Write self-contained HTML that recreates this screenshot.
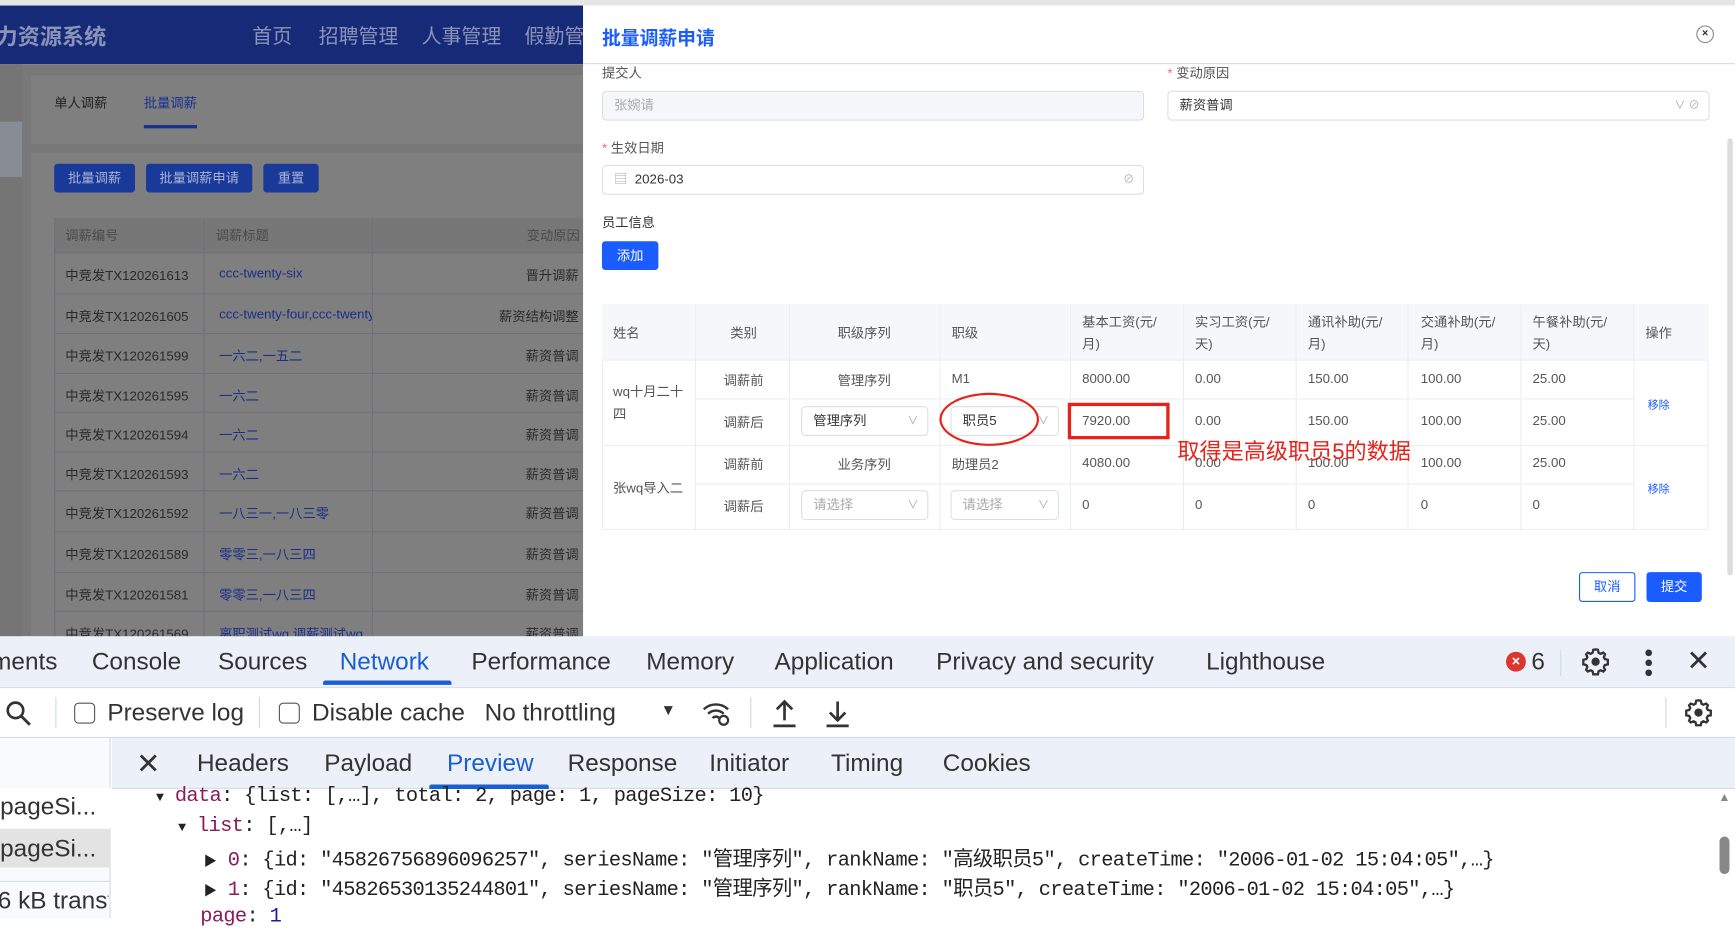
<!DOCTYPE html>
<html><head><meta charset="utf-8">
<style>
*{box-sizing:border-box;margin:0;padding:0}
html,body{width:1735px;height:918px;overflow:hidden;background:#fff}
#w{position:absolute;left:0;top:0;width:1568px;height:830px;transform:scale(1.10651);transform-origin:0 0;font-family:"Liberation Sans","Noto Sans CJK SC",sans-serif;color:#333}
.a{position:absolute}
.t{position:absolute;white-space:nowrap}
.cell{position:absolute;font-size:12px;color:#555;white-space:nowrap}
.dt{position:absolute;font-size:22px;color:#333;top:585px;white-space:nowrap;font-family:"Liberation Sans","Noto Sans CJK SC",sans-serif}
.code{position:absolute;font-family:"Liberation Mono","Noto Sans CJK SC",monospace;font-size:18.4px;color:#222;white-space:nowrap;letter-spacing:-0.6px}
.k{color:#8b1a5a}
.sel{position:absolute;border:1px solid #dcdfe6;border-radius:4px;background:#fff;font-size:12px;padding-left:10px}
</style></head><body><div id="w">
<div class="a" style="left:0;top:0;width:527px;height:5px;background:#e6e6e6"></div>
<div class="a" style="left:0;top:5px;width:527px;height:53px;background:#172a78"></div>
<div class="t" style="left:-4px;top:17px;font-size:20px;font-weight:bold;color:#8a93b8">力资源系统</div>
<div class="t" style="left:228px;top:19px;font-size:18px;color:#8a93b8">首页</div>
<div class="t" style="left:288px;top:19px;font-size:18px;color:#8a93b8">招聘管理</div>
<div class="t" style="left:381px;top:19px;font-size:18px;color:#8a93b8">人事管理</div>
<div class="t" style="left:474px;top:19px;font-size:18px;color:#8a93b8">假勤管</div>
<div class="a" style="left:0;top:58px;width:527px;height:517px;background:#787878"></div>
<div class="a" style="left:0;top:58px;width:20px;height:517px;background:#757575"></div>
<div class="a" style="left:0;top:110px;width:20px;height:50px;background:#888c94"></div>
<div class="a" style="left:28px;top:68px;width:499px;height:62px;background:#7f7f7f"></div>
<div class="t" style="left:49px;top:84px;font-size:12px;color:#222">单人调薪</div>
<div class="t" style="left:130px;top:84px;font-size:12px;color:#1a3190">批量调薪</div>
<div class="a" style="left:130px;top:113px;width:48px;height:3px;background:#1a3190"></div>
<div class="a" style="left:28px;top:138px;width:499px;height:437px;background:#7f7f7f"></div>
<div class="a" style="left:49px;top:148px;width:73px;height:26px;background:#1a3a9a;border-radius:3px;color:#a8b3d6;font-size:12px;text-align:center;line-height:26px">批量调薪</div>
<div class="a" style="left:132px;top:148px;width:96px;height:26px;background:#1a3a9a;border-radius:3px;color:#a8b3d6;font-size:12px;text-align:center;line-height:26px">批量调薪申请</div>
<div class="a" style="left:238px;top:148px;width:50px;height:26px;background:#1a3a9a;border-radius:3px;color:#a8b3d6;font-size:12px;text-align:center;line-height:26px">重置</div>
<div class="a" style="left:49px;top:197px;width:478px;height:31px;background:#777"></div>
<div class="a" style="left:49px;top:197px;width:1px;height:378px;background:#707078"></div>
<div class="a" style="left:184px;top:197px;width:1px;height:378px;background:#707078"></div>
<div class="a" style="left:336px;top:197px;width:1px;height:378px;background:#707078"></div>
<div class="t" style="left:59px;top:204px;font-size:12px;color:#4a4a4a">调薪编号</div>
<div class="t" style="left:195px;top:204px;font-size:12px;color:#4a4a4a">调薪标题</div>
<div class="t" style="left:476px;top:204px;font-size:12px;color:#4a4a4a">变动原因</div>
<div id="lt"></div>
<div class="a" style="left:527px;top:0;width:1041px;height:5px;background:#e6e6e6"></div>
<div class="a" style="left:527px;top:5px;width:1041px;height:570px;background:#fff"></div>
<div class="t" style="left:544px;top:20px;font-size:17px;font-weight:bold;color:#1a5cff">批量调薪申请</div>
<div class="a" style="left:1533px;top:23px;width:16px;height:16px;border:1.5px solid #888;border-radius:50%;font-size:10px;text-align:center;line-height:13px;color:#333;font-weight:bold">×</div>
<div class="a" style="left:527px;top:57px;width:1041px;height:1px;background:#ddd"></div>
<div class="a" style="left:1561px;top:125px;width:5px;height:395px;background:#ddd;border-radius:3px"></div>
<div class="t" style="left:544px;top:57px;font-size:12px;color:#555">提交人</div>
<div class="t" style="left:1055px;top:57px;font-size:12px;color:#555"><span style="color:#f56c6c">*</span> 变动原因</div>
<div class="sel" style="left:544px;top:82px;width:490px;height:27px;background:#f5f7fa;color:#aaa;line-height:25px">张婉请</div>
<div class="sel" style="left:1055px;top:82px;width:490px;height:27px;color:#333;line-height:25px">薪资普调<span style="position:absolute;right:8px;color:#aaa;font-size:10px">∨ ⊘</span></div>
<div class="t" style="left:544px;top:125px;font-size:12px;color:#555"><span style="color:#f56c6c">*</span> 生效日期</div>
<div class="sel" style="left:544px;top:149px;width:490px;height:27px;color:#333;line-height:25px"><span style="color:#aaa">▤</span>&nbsp; 2026-03<span style="position:absolute;right:8px;color:#aaa;font-size:10px">⊘</span></div>
<div class="t" style="left:544px;top:192px;font-size:12px;color:#333">员工信息</div>
<div class="a" style="left:544px;top:218px;width:51px;height:26px;background:#1a5cff;border-radius:3px;color:#fff;font-size:12px;text-align:center;line-height:26px">添加</div>
<div class="a" style="left:544px;top:275px;width:1000px;height:204px;border:1px solid #ebeef5"></div>
<div class="a" style="left:544px;top:275px;width:1000px;height:51px;background:#f5f7fa;border-bottom:1px solid #ebeef5"></div>
<div id="tb"></div>
<div class="a" style="left:849px;top:355px;width:90px;height:48px;border:2px solid #e8221a;border-radius:50%"></div>
<div class="a" style="left:965px;top:364px;width:92px;height:33px;border:3px solid #e8221a"></div>
<div class="t" style="left:1064px;top:392px;font-size:20px;color:#e8221a">取得是高级职员5的数据</div>
<div class="a" style="left:1427px;top:517px;width:51px;height:27px;border:1px solid #1a5cff;border-radius:3px;color:#1a5cff;font-size:12px;text-align:center;line-height:25px">取消</div>
<div class="a" style="left:1488px;top:517px;width:50px;height:27px;background:#1a5cff;border-radius:3px;color:#fff;font-size:12px;text-align:center;line-height:27px">提交</div>
<div class="a" style="left:0;top:575px;width:1568px;height:47px;background:#ebf0f9;border-bottom:1px solid #d4dcea"></div>
<div class="dt" style="left:-8px">ments</div>
<div class="dt" style="left:83px">Console</div>
<div class="dt" style="left:197px">Sources</div>
<div class="dt" style="left:307px;color:#1a5fd0">Network</div>
<div class="a" style="left:292px;top:615px;width:116px;height:4px;background:#1a5fd0;border-radius:2px 2px 0 0"></div>
<div class="dt" style="left:426px">Performance</div>
<div class="dt" style="left:584px">Memory</div>
<div class="dt" style="left:700px">Application</div>
<div class="dt" style="left:846px">Privacy and security</div>
<div class="dt" style="left:1090px">Lighthouse</div>
<div class="a" style="left:1361px;top:589px;width:18px;height:18px;background:#dc362e;border-radius:50%;color:#fff;font-size:13px;text-align:center;line-height:18px;font-weight:bold">×</div>
<div class="dt" style="left:1384px">6</div>
<div class="a" style="left:1410px;top:587px;width:1px;height:24px;background:#cfd9ea"></div>
<svg class="a" style="left:1428px;top:584px" width="28" height="28" viewBox="0 0 24 24"><path d="M12 2.5l1.8.3.5 2.3 1.5.8 2.2-.9 1.3 1.3-.9 2.2.8 1.5 2.3.5v3.6l-2.3.5-.8 1.5.9 2.2-1.3 1.3-2.2-.9-1.5.8-.5 2.3h-3.6l-.5-2.3-1.5-.8-2.2.9-1.3-1.3.9-2.2-.8-1.5-2.3-.5v-3.6l2.3-.5.8-1.5-.9-2.2 1.3-1.3 2.2.9 1.5-.8.5-2.3z" fill="none" stroke="#333" stroke-width="1.8"/><circle cx="12" cy="12" r="3.2" fill="#333"/></svg>
<div class="a" style="left:1487px;top:587px;width:6px;height:6px;background:#333;border-radius:50%"></div>
<div class="a" style="left:1487px;top:596px;width:6px;height:6px;background:#333;border-radius:50%"></div>
<div class="a" style="left:1487px;top:605px;width:6px;height:6px;background:#333;border-radius:50%"></div>
<div class="dt" style="left:1524px;top:582px;font-size:26px">✕</div>
<div class="a" style="left:0;top:622px;width:1568px;height:45px;background:#fff;border-bottom:1px solid #d4dcea"></div>
<svg class="a" style="left:4px;top:632px" width="26" height="26" viewBox="0 0 26 26"><circle cx="10" cy="10" r="7" fill="none" stroke="#333" stroke-width="2.4"/><path d="M15 15l8 8" stroke="#333" stroke-width="2.6"/></svg>
<div class="a" style="left:50px;top:630px;width:1px;height:28px;background:#cfd9ea"></div>
<div class="a" style="left:67px;top:635px;width:19px;height:19px;border:1.8px solid #555;border-radius:4px"></div>
<div class="dt" style="left:97px;top:631px">Preserve log</div>
<div class="a" style="left:234px;top:630px;width:1px;height:28px;background:#cfd9ea"></div>
<div class="a" style="left:252px;top:635px;width:19px;height:19px;border:1.8px solid #555;border-radius:4px"></div>
<div class="dt" style="left:282px;top:631px">Disable cache</div>
<div class="dt" style="left:438px;top:631px">No throttling</div>
<div class="dt" style="left:597px;top:633px;font-size:14px">▼</div>
<svg class="a" style="left:633px;top:632px" width="30" height="26" viewBox="0 0 30 26"><path d="M3 9a16 16 0 0 1 22 0M7 13a10 10 0 0 1 14 0M11 17a4 4 0 0 1 6 0" fill="none" stroke="#333" stroke-width="2.2"/><circle cx="21" cy="19" r="4" fill="none" stroke="#333" stroke-width="2"/></svg>
<div class="a" style="left:678px;top:630px;width:1px;height:28px;background:#cfd9ea"></div>
<svg class="a" style="left:696px;top:631px" width="26" height="28" viewBox="0 0 26 28"><path d="M13 20V4M6 10l7-7 7 7M3 25h20" fill="none" stroke="#333" stroke-width="2.4"/></svg>
<svg class="a" style="left:744px;top:631px" width="26" height="28" viewBox="0 0 26 28"><path d="M13 3v16M6 13l7 7 7-7M3 25h20" fill="none" stroke="#333" stroke-width="2.4"/></svg>
<div class="a" style="left:1505px;top:630px;width:1px;height:28px;background:#cfd9ea"></div>
<svg class="a" style="left:1521px;top:630px" width="28" height="28" viewBox="0 0 24 24"><path d="M12 2.5l1.8.3.5 2.3 1.5.8 2.2-.9 1.3 1.3-.9 2.2.8 1.5 2.3.5v3.6l-2.3.5-.8 1.5.9 2.2-1.3 1.3-2.2-.9-1.5.8-.5 2.3h-3.6l-.5-2.3-1.5-.8-2.2.9-1.3-1.3.9-2.2-.8-1.5-2.3-.5v-3.6l2.3-.5.8-1.5-.9-2.2 1.3-1.3 2.2.9 1.5-.8.5-2.3z" fill="none" stroke="#333" stroke-width="1.8"/><circle cx="12" cy="12" r="3.2" fill="#333"/></svg>
<div class="a" style="left:0;top:667px;width:100px;height:163px;background:#f8fafd;border-right:1px solid #d4dcea"></div>
<div class="a" style="left:0;top:712px;width:100px;height:37px;background:#fff"></div>
<div class="a" style="left:0;top:749px;width:100px;height:35px;background:#e3e3e3"></div>
<div class="a" style="left:0;top:796px;width:100px;height:1px;background:#d4dcea"></div>
<div class="dt" style="left:-6px;top:716px">:pageSi...</div>
<div class="dt" style="left:-6px;top:754px">:pageSi...</div>
<div class="dt" style="left:-2px;top:801px;width:100px;overflow:hidden">6 kB transf</div>
<div class="a" style="left:101px;top:667px;width:1467px;height:46px;background:#ebf0f9;border-bottom:1px solid #d4dcea"></div>
<div class="dt" style="left:123px;top:675px;font-size:26px">✕</div>
<div class="dt" style="left:178px;top:677px">Headers</div>
<div class="dt" style="left:293px;top:677px">Payload</div>
<div class="dt" style="left:404px;top:677px;color:#1a5fd0">Preview</div>
<div class="a" style="left:388px;top:709px;width:108px;height:4px;background:#1a5fd0;border-radius:2px 2px 0 0"></div>
<div class="dt" style="left:513px;top:677px">Response</div>
<div class="dt" style="left:641px;top:677px">Initiator</div>
<div class="dt" style="left:751px;top:677px">Timing</div>
<div class="dt" style="left:852px;top:677px">Cookies</div>
<div class="code" style="left:141px;top:709px"><span style="font-size:12px">▼</span> <span class="k">data</span>: {list: [,…], total: 2, page: 1, pageSize: 10}</div>
<div class="code" style="left:161px;top:736px"><span style="font-size:12px">▼</span> <span class="k">list</span>: [,…]</div>
<div class="code" style="left:184px;top:762px"><span style="font-size:12px">▶</span> <span class="k">0</span>: {id: "45826756896096257", seriesName: "管理序列", rankName: "高级职员5", createTime: "2006-01-02 15:04:05",…}</div>
<div class="code" style="left:184px;top:789px"><span style="font-size:12px">▶</span> <span class="k">1</span>: {id: "45826530135244801", seriesName: "管理序列", rankName: "职员5", createTime: "2006-01-02 15:04:05",…}</div>
<div class="code" style="left:181px;top:818px"><span class="k">page</span>: <span style="color:#1a1aa6">1</span></div>
<div class="t" style="left:1553px;top:715px;font-size:11px;color:#888">▲</div>
<div class="a" style="left:1554px;top:756px;width:9px;height:34px;background:#888;border-radius:5px"></div>
</div>
<script>
var lt=document.getElementById('lt'),h='';
var rows=[["中竞发TX120261613","ccc-twenty-six","晋升调薪"],["中竞发TX120261605","ccc-twenty-four,ccc-twenty","薪资结构调整"],["中竞发TX120261599","一六二,一五二","薪资普调"],["中竞发TX120261595","一六二","薪资普调"],["中竞发TX120261594","一六二","薪资普调"],["中竞发TX120261593","一六二","薪资普调"],["中竞发TX120261592","一八三一,一八三零","薪资普调"],["中竞发TX120261589","零零三,一八三四","薪资普调"],["中竞发TX120261581","零零三,一八三四","薪资普调"],["中竞发TX120261569","离职测试wq,调薪测试wq","薪资普调"]];
var ys=[228,265,301,337,372,408,443,480,517,552];
rows.forEach(function(r,i){var y=ys[i];h+='<div class="a" style="left:49px;top:'+y+'px;width:478px;height:1px;background:#707078"></div>';
h+='<div class="t" style="left:59px;top:'+(y+12)+'px;font-size:12px;color:#2a2a2a">'+r[0]+'</div>';
h+='<div class="t" style="left:198px;top:'+(y+12)+'px;font-size:12px;color:#1a2e8a;width:138px;overflow:hidden">'+r[1]+'</div>';
h+='<div class="t" style="right:1045px;top:'+(y+12)+'px;font-size:12px;color:#2a2a2a">'+r[2]+'</div>';});
lt.innerHTML=h;
var tb=document.getElementById('tb');h='';
var cx=[628,713,849,967,1069,1171,1272,1374,1476];
cx.forEach(function(x){h+='<div class="a" style="left:'+x+'px;top:275px;width:1px;height:204px;background:#ebeef5"></div>';});
[360,437].forEach(function(y){h+='<div class="a" style="left:628px;top:'+y+'px;width:848px;height:1px;background:#ebeef5"></div>';});
h+='<div class="a" style="left:544px;top:402px;width:1000px;height:1px;background:#ebeef5"></div>';
function c(x,y,t,s){h+='<div class="cell" style="left:'+x+'px;top:'+y+'px;'+(s||'')+'">'+t+'</div>';}
c(554,292,'姓名');c(660,292,'类别');c(757,292,'职级序列');c(860,292,'职级');
c(978,281,'基本工资(元/<br>月)','line-height:20px');c(1080,281,'实习工资(元/<br>天)','line-height:20px');c(1182,281,'通讯补助(元/<br>月)','line-height:20px');c(1284,281,'交通补助(元/<br>月)','line-height:20px');c(1385,281,'午餐补助(元/<br>天)','line-height:20px');c(1487,292,'操作');
c(554,344,'wq十月二十<br>四','line-height:20px');c(554,432,'张wq导入二');
c(654,335,'调薪前');c(757,335,'管理序列');c(860,335,'M1');c(978,335,'8000.00');c(1080,335,'0.00');c(1182,335,'150.00');c(1284,335,'100.00');c(1385,335,'25.00');
c(654,373,'调薪后');c(978,373,'7920.00');c(1080,373,'0.00');c(1182,373,'150.00');c(1284,373,'100.00');c(1385,373,'25.00');
c(654,411,'调薪前');c(757,411,'业务序列');c(860,411,'助理员2');c(978,411,'4080.00');c(1080,411,'0.00');c(1182,411,'100.00');c(1284,411,'100.00');c(1385,411,'25.00');
c(654,449,'调薪后');c(978,449,'0');c(1080,449,'0');c(1182,449,'0');c(1284,449,'0');c(1385,449,'0');
c(1489,357,'移除','color:#1a5cff;font-size:10px');c(1489,433,'移除','color:#1a5cff;font-size:10px');
function s(x,y,w,t,col){h+='<div class="sel" style="left:'+x+'px;top:'+y+'px;width:'+w+'px;height:27px;line-height:25px;color:'+col+'">'+t+'<span style="position:absolute;right:8px;color:#aaa;font-size:10px">∨</span></div>';}
s(724,367,115,'管理序列','#333');s(859,367,98,'职员5','#333');s(724,443,115,'请选择','#aaa');s(859,443,98,'请选择','#aaa');
tb.innerHTML=h;
</script>
</body></html>
